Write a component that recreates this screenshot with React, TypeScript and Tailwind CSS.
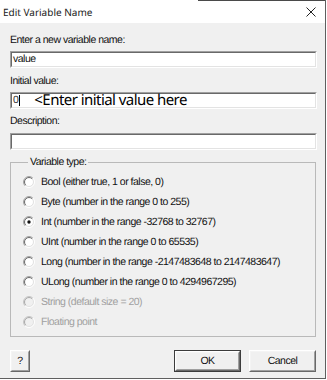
import React from "react";

const LBL = "text-[10.5px] leading-[13px] tracking-[-0.5px] text-[#111]";

function Radio({ checked, disabled }: { checked?: boolean; disabled?: boolean }) {
  const r1 = 5.5;
  const r2 = 4.5;
  const c = 6;
  const k = 0.7071;
  const arc = (r: number, first: boolean) =>
    first
      ? `M ${c - r * k} ${c + r * k} A ${r} ${r} 0 0 1 ${c + r * k} ${c - r * k}`
      : `M ${c + r * k} ${c - r * k} A ${r} ${r} 0 0 1 ${c - r * k} ${c + r * k}`;
  return (
    <svg width="12" height="12" viewBox="0 0 12 12" className="shrink-0">
      <circle cx={c} cy={c} r={4.2} fill={disabled ? "#f0f0f0" : "#ffffff"} />
      <path d={arc(r1, true)} stroke={disabled ? "#c4c4c4" : "#a0a0a0"} strokeWidth="1" fill="none" />
      <path d={arc(r1, false)} stroke="#ffffff" strokeWidth="1" fill="none" />
      <path d={arc(r2, true)} stroke={disabled ? "#a8a8a8" : "#696969"} strokeWidth="1" fill="none" />
      <path d={arc(r2, false)} stroke="#e3e3e3" strokeWidth="1" fill="none" />
      {checked && <circle cx={c} cy={c} r={1.7} fill="#111" />}
    </svg>
  );
}

function Field({ children }: { children?: React.ReactNode }) {
  return (
    <div className="h-[17px] border border-t-[#a0a0a0] border-l-[#a0a0a0] border-b-[#ffffff] border-r-[#ffffff]">
      <div className="h-full border border-t-[#696969] border-l-[#696969] border-b-[#e3e3e3] border-r-[#e3e3e3] bg-white flex items-center">
        {children}
      </div>
    </div>
  );
}

function Btn({ label, w, def }: { label: string; w: string; def?: boolean }) {
  return (
    <div className={`${w} h-[22px] ${def ? "border border-[#3c3c3c]" : ""}`}>
      <div className="h-full border border-t-white border-l-white border-b-[#696969] border-r-[#696969]">
        <div className={`h-full border border-t-[#f4f4f4] border-l-[#f4f4f4] border-b-[#a0a0a0] border-r-[#a0a0a0] bg-[#f0f0f0] flex items-center justify-center ${LBL}`}>
          {label}
        </div>
      </div>
    </div>
  );
}

const options: { t: string; checked?: boolean; disabled?: boolean }[] = [
  { t: "Bool (either true, 1 or false, 0)" },
  { t: "Byte (number in the range 0 to 255)" },
  { t: "Int (number in the range -32768 to 32767)", checked: true },
  { t: "UInt (number in the range 0 to 65535)" },
  { t: "Long (number in the range -2147483648 to 2147483647)" },
  { t: "ULong (number in the range 0 to 4294967295)" },
  { t: "String (default size = 20)", disabled: true },
  { t: "Floating point", disabled: true },
];

export default function App() {
  return (
    <div
      className="w-[327px] h-[380px] bg-white overflow-hidden [text-rendering:geometricPrecision]"
      style={{ fontFamily: '"Liberation Sans", Arial, sans-serif' }}
    >
      <div className="w-[326px] border-r border-b border-[#5f5f5f]">
        <div className="flex h-[1px]">
          <div className="w-[198px] bg-white" />
          <div className="flex-1 bg-[#4a4a4a]" />
        </div>
        <div className="h-[22px] bg-white flex items-center justify-between pl-[3px] pr-[9px]">
          <span className="text-[10px] text-[#1a1a1a]" style={{ fontFamily: '"Noto Sans", "Open Sans", sans-serif' }}>
            Edit Variable Name
          </span>
          <svg width="10" height="10" viewBox="0 0 10 10">
            <path d="M0.5 0.5 L9.5 9.5 M9.5 0.5 L0.5 9.5" stroke="#222" strokeWidth="1" />
          </svg>
        </div>
        <div className="bg-[#f0f0f0] pl-[10px] pr-[8px] pt-[11px] pb-[6px]">
          <div className={LBL}>Enter a new variable name:</div>
          <div className="mt-[4px]">
            <Field>
              <span className={`${LBL} pl-[1px]`}>value</span>
            </Field>
          </div>
          <div className={`${LBL} mt-[7px]`}>Initial value:</div>
          <div className="mt-[4px]">
            <Field>
              <span className={`${LBL} pl-[1px] text-[#333]`}>0</span>
              <span className="w-[1px] h-[11px] bg-black ml-[1px]" />
              <span
                className="ml-[14px] text-[15px] leading-[13px] tracking-[-0.55px] text-black whitespace-nowrap"
                style={{ fontFamily: '"Noto Sans", "Open Sans", sans-serif' }}
              >
                &lt;Enter initial value here
              </span>
            </Field>
          </div>
          <div className={`${LBL} mt-[6px]`}>Description:</div>
          <div className="mt-[5px]">
            <Field />
          </div>
          <fieldset className="mt-[6px] border border-[#b9b9b9] pl-[12px] pt-[3px] pb-[4px] w-[306px]">
            <legend className={`${LBL} ml-[5px] px-[2px]`}>Variable type:</legend>
            {options.map((o) => (
              <div key={o.t} className="h-[20px] flex items-center gap-[6px]">
                <Radio checked={o.checked} disabled={o.disabled} />
                <span className={`${LBL} whitespace-nowrap ${o.disabled ? "text-[#a0a0a0]" : ""}`}>{o.t}</span>
              </div>
            ))}
          </fieldset>
          <div className="mt-[13px] flex items-center">
            <Btn label="?" w="w-[20px]" />
            <div className="flex-1" />
            <Btn label="OK" w="w-[67px]" def />
            <div className="w-[8px]" />
            <Btn label="Cancel" w="w-[67px]" />
            <div className="w-[1px]" />
          </div>
        </div>
      </div>
    </div>
  );
}
